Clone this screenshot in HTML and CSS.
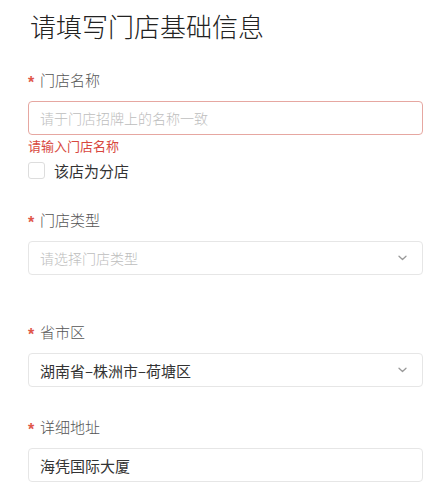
FILE: index.html
```html
<!DOCTYPE html>
<html lang="zh-CN">
<head>
<meta charset="utf-8">
<title>请填写门店基础信息</title>
<link rel="stylesheet" href="styles.css">
</head>
<body>
<div class="page">
  <h1 class="title">请填写门店基础信息</h1>

  <div class="field field-name">
    <div class="label"><span class="star">*</span>门店名称</div>
    <div class="control control-error"><span class="placeholder">请于门店招牌上的名称一致</span></div>
    <div class="error">请输入门店名称</div>
    <label class="check"><span class="box"></span><span class="check-text">该店为分店</span></label>
  </div>

  <div class="field field-type">
    <div class="label"><span class="star">*</span>门店类型</div>
    <div class="control select"><span class="placeholder">请选择门店类型</span>
      <svg class="chev" width="9" height="6" viewBox="0 0 9 6"><path d="M1 1.2l3.5 3.3 3.5-3.3" fill="none" stroke="#9a9a9a" stroke-width="1.3" stroke-linecap="round" stroke-linejoin="round"/></svg>
    </div>
  </div>

  <div class="field field-region">
    <div class="label"><span class="star">*</span>省市区</div>
    <div class="control select"><span class="value">湖南省–株洲市–荷塘区</span>
      <svg class="chev" width="9" height="6" viewBox="0 0 9 6"><path d="M1 1.2l3.5 3.3 3.5-3.3" fill="none" stroke="#9a9a9a" stroke-width="1.3" stroke-linecap="round" stroke-linejoin="round"/></svg>
    </div>
  </div>

  <div class="field field-addr">
    <div class="label"><span class="star">*</span>详细地址</div>
    <div class="control"><span class="value">海凭国际大厦</span></div>
  </div>
</div>
</body>
</html>
```
FILE: styles.css
```css
html, body {
  margin: 0;
  padding: 0;
  background: #ffffff;
}
body {
  font-family: "Noto Sans CJK SC", "Noto Sans", sans-serif;
  color: #333333;
}
.page {
  padding: 0 3px 0 28px;
}
.title {
  margin: 0;
  font-size: 26px;
  line-height: 52px;
  font-weight: 300;
  color: #222222;
  padding-left: 2px;
}
.field {
  display: flex;
  flex-direction: column;
}
.field-name { margin-top: 18px; }
.field-type { margin-top: 31px; }
.field-region { margin-top: 47px; }
.field-addr { margin-top: 30px; }
.label {
  height: 20px;
  line-height: 20px;
  font-size: 15px;
  font-weight: 300;
  color: #555555;
  display: flex;
  align-items: center;
}
.star {
  color: #e0574a;
  font-size: 16px;
  font-weight: 700;
  font-family: "Liberation Sans", sans-serif;
  width: 12px;
  padding-top: 5px;
}
.control {
  margin-top: 11px;
  height: 34px;
  box-sizing: border-box;
  border: 1px solid #e6e6e6;
  border-radius: 4px;
  display: flex;
  align-items: center;
  padding: 0 12px 0 11px;
  font-size: 15px;
}
.control-error {
  border-color: #e6a7a1;
}
.placeholder {
  color: #bdbdbd;
  font-size: 14px;
  font-weight: 300;
}
.value {
  color: #333333;
}
.select {
  justify-content: space-between;
}
.chev {
  margin-right: 3px;
}
.error {
  margin-top: 2px;
  height: 18px;
  line-height: 18px;
  font-size: 13px;
  color: #d8483e;
}
.check {
  margin-top: 6px;
  height: 18px;
  display: flex;
  align-items: center;
  gap: 9px;
}
.box {
  width: 17px;
  height: 17px;
  box-sizing: border-box;
  border: 1px solid #dddddd;
  border-radius: 3px;
  background: #ffffff;
}
.check-text {
  font-size: 15px;
  color: #333333;
}
```
